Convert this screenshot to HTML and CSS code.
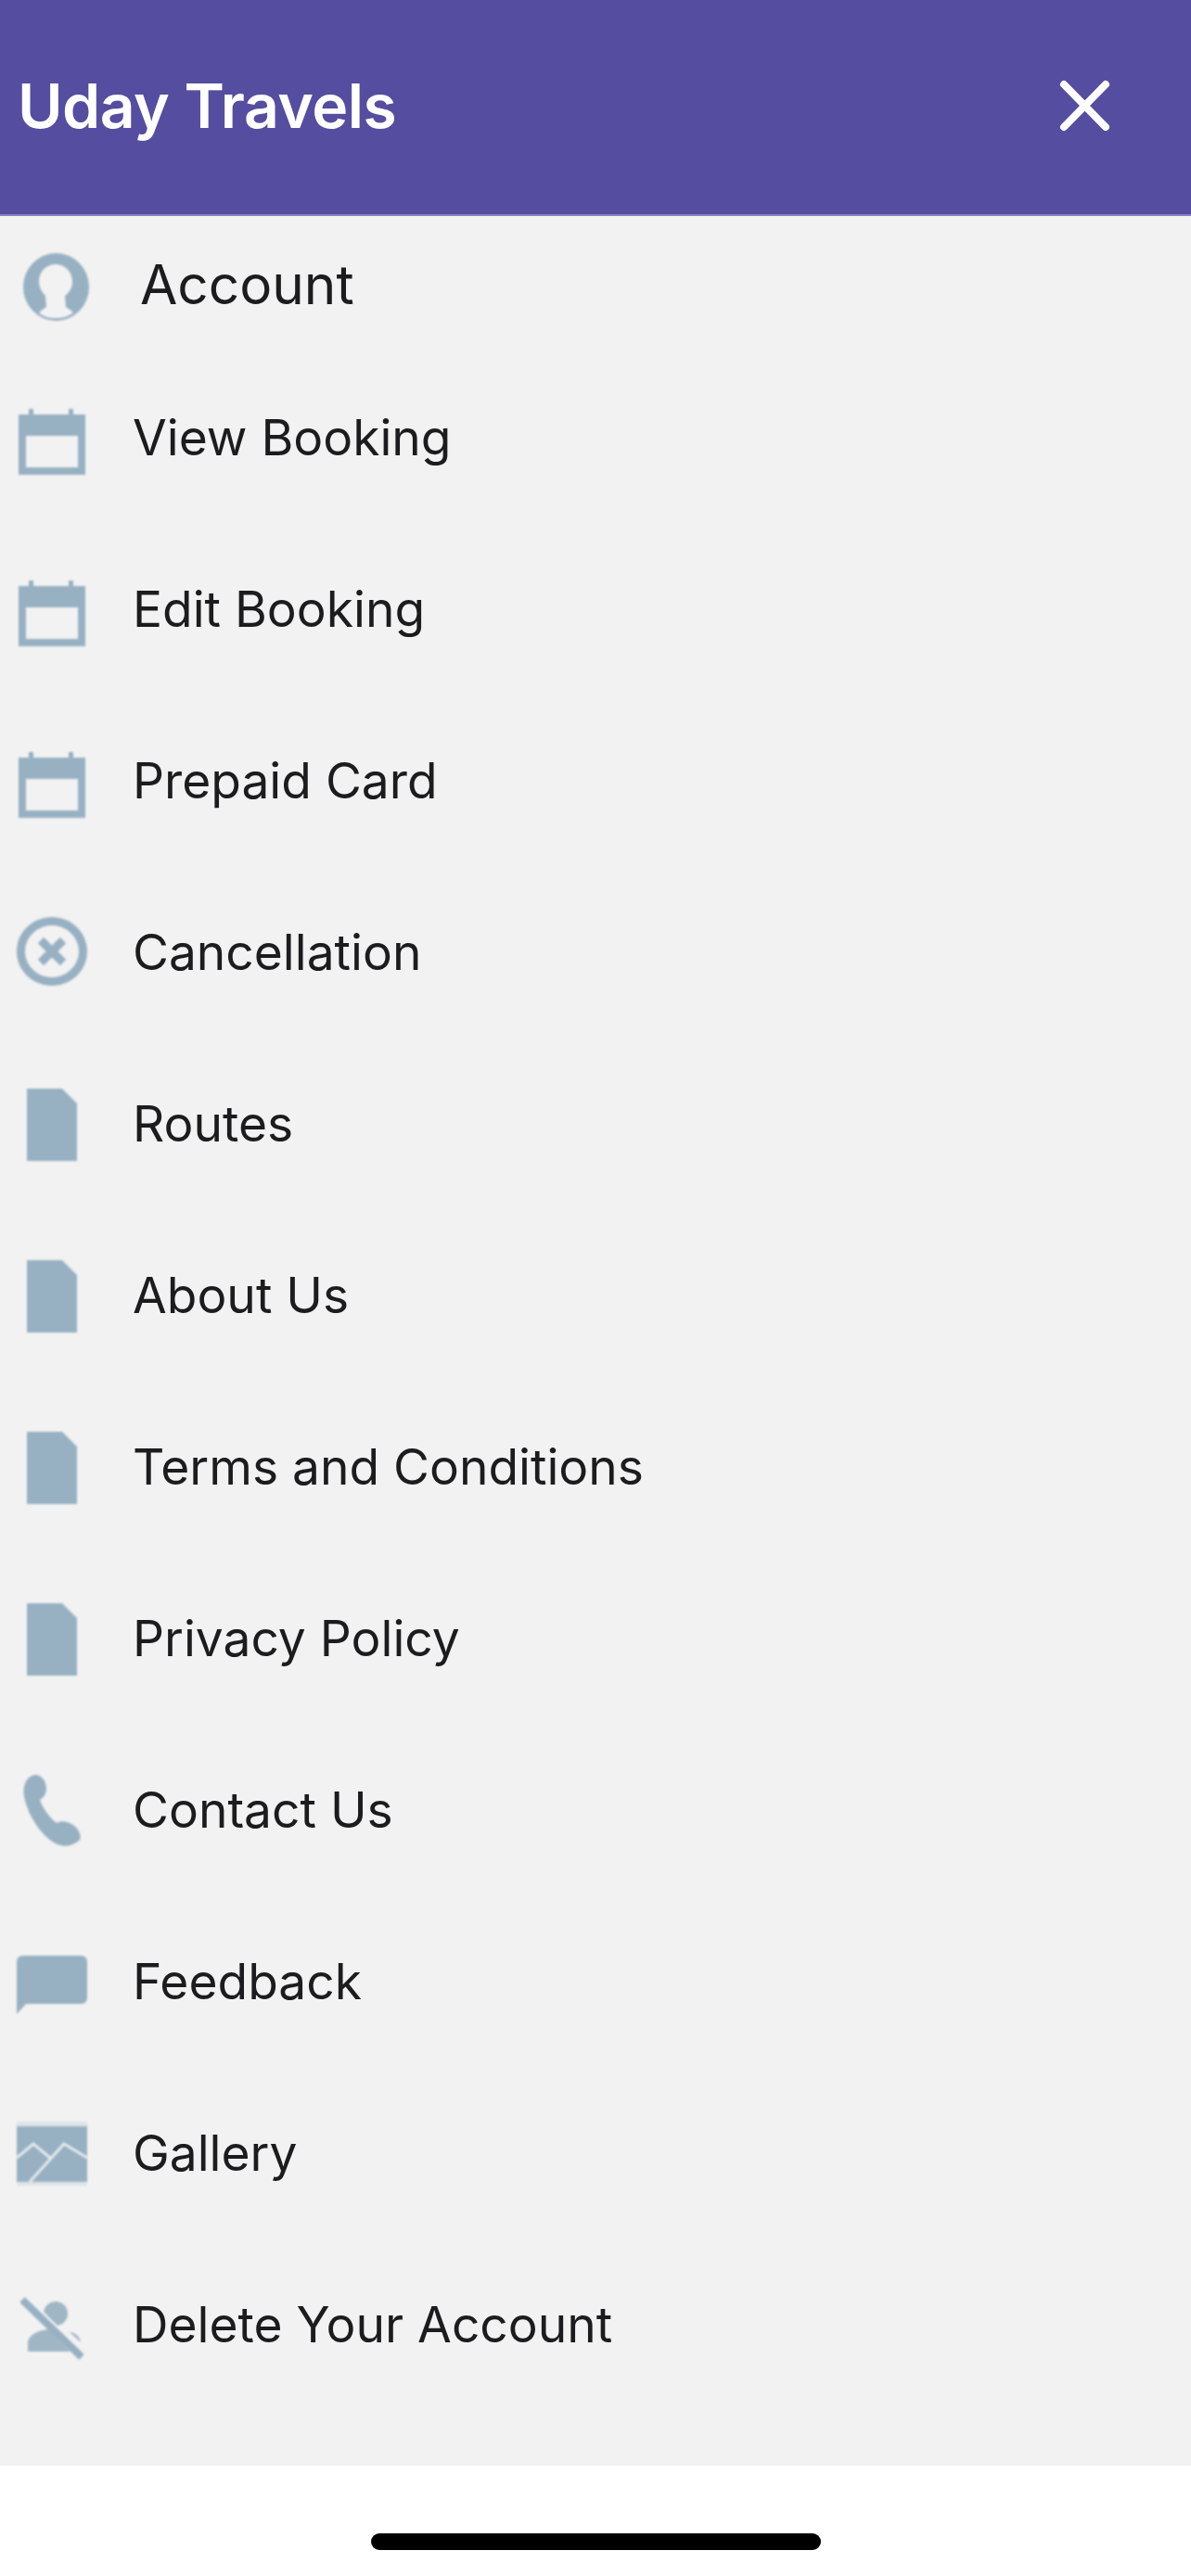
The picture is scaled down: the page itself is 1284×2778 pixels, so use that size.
FILE: index.html
```html
<!DOCTYPE html>
<html lang="en">
<head>
<meta charset="utf-8">
<title>Uday Travels</title>
<link rel="stylesheet" href="styles.css">
</head>
<body>
<div class="screen">
  <header class="header">
    <h1 class="title">Uday Travels</h1>
    <svg class="close" viewBox="0 0 55 56" width="55" height="56"><path d="M5 5 50 51M50 5 5 51"/></svg>
  </header>
  <nav class="menu">
    <div class="row row-account">
      <span class="slot"><svg class="icon" viewBox="0 0 71 73" width="71" height="73"><ellipse cx="35.5" cy="36.5" rx="35.5" ry="36.5"/><path class="cut" d="M35 12C46 12 53 21 53 31 53 38 49 43 45 46L46 58C49 60 52 62 54 64 48 69 42 70 35 70 28 70 22 69 17 64 19 62 22 60 25 58L24 46C20 42 17 37 17 30 17 20 25 12 35 12Z"/></svg></span>
      <span class="label label-account">Account</span>
    </div>
    <div class="row"><span class="slot shift-5"><svg class="icon" viewBox="0 0 76 73" width="76" height="73"><use href="#cal"/></svg></span><span class="label">View Booking</span></div>
    <div class="row"><span class="slot shift-5"><svg class="icon" viewBox="0 0 76 73" width="76" height="73"><use href="#cal"/></svg></span><span class="label">Edit Booking</span></div>
    <div class="row"><span class="slot shift-5"><svg class="icon" viewBox="0 0 76 73" width="76" height="73"><use href="#cal"/></svg></span><span class="label">Prepaid Card</span></div>
    <div class="row"><span class="slot lift-3"><svg class="icon" viewBox="0 0 76 74" width="76" height="74"><path fill-rule="evenodd" d="M38 0C59 0 76 16.500 76 37S59 74 38 74 0 57.500 0 37 17 0 38 0ZM38 9C22.500 9 9 21.500 9 37S22.500 65 38 65 67 52.500 67 37 53.500 9 38 9Z"/><path class="stroke" d="M26 25 50 49M50 25 26 49"/></svg></span><span class="label">Cancellation</span></div>
    <div class="row"><span class="slot shift-1"><svg class="icon" viewBox="0 0 54 78" width="54" height="78"><use href="#doc"/></svg></span><span class="label">Routes</span></div>
    <div class="row"><span class="slot shift-1"><svg class="icon" viewBox="0 0 54 78" width="54" height="78"><use href="#doc"/></svg></span><span class="label">About Us</span></div>
    <div class="row"><span class="slot shift-1"><svg class="icon" viewBox="0 0 54 78" width="54" height="78"><use href="#doc"/></svg></span><span class="label">Terms and Conditions</span></div>
    <div class="row"><span class="slot shift-1"><svg class="icon" viewBox="0 0 54 78" width="54" height="78"><use href="#doc"/></svg></span><span class="label">Privacy Policy</span></div>
    <div class="row"><span class="slot"><svg class="icon" viewBox="0 0 62 77" width="62" height="77"><path d="M13 0C20 0 25 7 25 15 25 20 22 25 18 27 21 36 29 47 36 52 41 49 49 50 55 55 60 59 63 65 61 70 56 75 48 78 40 76 24 72 5 46 1 23 -1 13 3 1 13 0Z"/></svg></span><span class="label">Contact Us</span></div>
    <div class="row"><span class="slot shift-6"><svg class="icon" viewBox="0 0 76 63" width="76" height="63"><path d="M0 7Q0 0 7 0H69Q76 0 76 7V45Q76 52 69 52H10L0 63Z"/></svg></span><span class="label">Feedback</span></div>
    <div class="row"><span class="slot"><svg class="icon" viewBox="0 0 76 69" width="76" height="69"><rect y="0" width="76" height="69" opacity=".2"/><rect y="5" width="76" height="60"/><path class="hill" d="M0 39 18 24 36 39M14 65 51 24 76 39"/></svg></span><span class="label">Gallery</span></div>
    <div class="row"><span class="slot shift-7"><svg class="icon icon-soft" viewBox="0 0 68 68" width="68" height="68"><circle cx="38" cy="18" r="13"/><path d="M8 59V48C10 40 20 36 30 35L54 59Z"/><path d="M53 38C58 38 64 42 65 49Z"/><path class="gap" d="M6 0 66 60"/><path class="slash" d="M2 3 66 65"/></svg></span><span class="label">Delete Your Account</span></div>
  </nav>
  <footer class="home"><span class="home-bar"></span></footer>
</div>
<svg class="defs" width="0" height="0" aria-hidden="true">
  <defs>
    <path id="cal" fill-rule="evenodd" d="M13 2H18V8H56V2H61V8H74V73H2V8H13ZM10 31V65H66V31Z"/>
    <path id="doc" d="M0 0H38L54 16V78H0Z"/>
  </defs>
</svg>
</body>
</html>
```
FILE: styles.css
```css
* { box-sizing: border-box; }
html, body { margin: 0; padding: 0; }
body { background: #fff; font-family: Inter, "Noto Sans", sans-serif; }
.screen { width: 1284px; height: 2778px; display: flex; flex-direction: column; overflow: hidden; }
.header {
  height: 233px; flex: none; background: #554d9f; border-bottom: 2px solid #8a80c8;
  display: flex; align-items: center; justify-content: space-between;
  padding: 0 87px 4px 19px;
}
.title { margin: 0; color: #fff; font-size: 66px; font-weight: 600; letter-spacing: -0.5px; filter: blur(.5px); }
.close { fill: none; stroke: #fff; stroke-width: 8; stroke-linecap: round; filter: blur(.6px); }
.menu { height: 2426px; flex: none; background: #f2f2f2; padding-bottom: 59px; display: flex; flex-direction: column; }
.row { height: 185px; flex: none; display: flex; align-items: center; }
.row-account { height: 147px; }
.slot { width: 112px; margin-right: 31px; flex: none; display: flex; justify-content: center; }
.shift-1 { padding-top: 1px; }
.shift-5 { padding-top: 5px; }
.shift-6 { padding-top: 6px; }
.shift-7 { padding-top: 7px; }
.lift-3 { padding-bottom: 3px; }
.row-account .slot { width: 120px; margin-right: 31px; padding-top: 5px; }
.icon { display: block; fill: #97b1c2; filter: blur(1px); }
.icon-soft { fill: #a0b6c5; }
.cut { fill: #f2f2f2; }
.stroke { fill: none; stroke: #97b1c2; stroke-width: 9; }
.hill { fill: none; stroke: #e3e9ed; stroke-width: 3; }
.gap { fill: none; stroke: #f2f2f2; stroke-width: 4; }
.slash { fill: none; stroke: #97b1c2; stroke-width: 8; }
.label { color: #1c1c1e; font-size: 53.3px; letter-spacing: 0; white-space: nowrap; padding-bottom: 3px; filter: blur(.4px); }
.label-account { font-size: 58.5px; padding-bottom: 0; }
.home { flex: 1; background: #fff; display: flex; justify-content: center; padding-top: 73px; }
.home-bar { width: 485px; height: 18px; border-radius: 9px; background: #000; }
.defs { position: absolute; }
```
